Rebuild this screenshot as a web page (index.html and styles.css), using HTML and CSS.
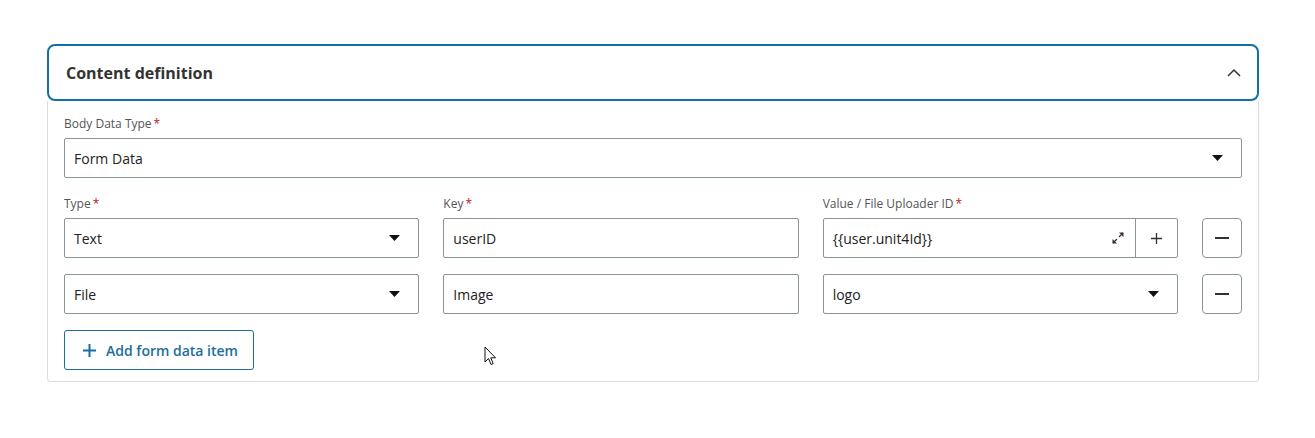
FILE: index.html
```html
<!DOCTYPE html>
<html lang="en">
<head>
    <meta charset="UTF-8">
    <meta name="viewport" content="width=device-width, initial-scale=1.0">
    <title>Content definition</title>
    <link rel="stylesheet" href="styles.css">
</head>
<body>
    <div class="card">
        <div class="card-header">
            <h2>Content definition</h2>
            <svg class="chevron" width="14" height="9" viewBox="0 0 14 9"><polyline points="1,8 7,2 13,8" fill="none" stroke="#333" stroke-width="1.5"/></svg>
        </div>
        <div class="card-body">
            <label class="label">Body Data Type<span class="req">*</span></label>
            <div class="field select">
                <span>Form Data</span>
                <svg class="caret" width="11" height="6" viewBox="0 0 11 6"><polygon points="0,0 11,0 5.5,6" fill="#111"/></svg>
            </div>

            <div class="row labels">
                <label class="label">Type<span class="req">*</span></label>
                <label class="label">Key<span class="req">*</span></label>
                <label class="label">Value / File Uploader ID<span class="req">*</span></label>
                <span></span>
            </div>

            <div class="row">
                <div class="field select">
                    <span>Text</span>
                    <svg class="caret" width="11" height="6" viewBox="0 0 11 6"><polygon points="0,0 11,0 5.5,6" fill="#111"/></svg>
                </div>
                <div class="field"><span>userID</span></div>
                <div class="field combo">
                    <div class="combo-input">
                        <span>{{user.unit4Id}}</span>
                        <svg class="expand" width="14" height="14" viewBox="0 0 14 14">
                            <path d="M2 12 L6 8 M8 6 L12 2" stroke="#333" stroke-width="1.2" fill="none"/>
                            <polygon points="1.5,8 1.5,12.5 6,12.5" fill="#333"/>
                            <polygon points="8,1.5 12.5,1.5 12.5,6" fill="#333"/>
                        </svg>
                    </div>
                    <div class="combo-btn">
                        <svg width="11" height="11" viewBox="0 0 11 11"><path d="M5.5 0 V11 M0 5.5 H11" stroke="#333" stroke-width="1.3"/></svg>
                    </div>
                </div>
                <button class="icon-btn">
                    <svg width="14" height="2" viewBox="0 0 14 2"><path d="M0 1 H14" stroke="#333" stroke-width="2"/></svg>
                </button>
            </div>

            <div class="row">
                <div class="field select">
                    <span>File</span>
                    <svg class="caret" width="11" height="6" viewBox="0 0 11 6"><polygon points="0,0 11,0 5.5,6" fill="#111"/></svg>
                </div>
                <div class="field"><span>Image</span></div>
                <div class="field select">
                    <span>logo</span>
                    <svg class="caret" width="11" height="6" viewBox="0 0 11 6"><polygon points="0,0 11,0 5.5,6" fill="#111"/></svg>
                </div>
                <button class="icon-btn">
                    <svg width="14" height="2" viewBox="0 0 14 2"><path d="M0 1 H14" stroke="#333" stroke-width="2"/></svg>
                </button>
            </div>

            <button class="add-btn">
                <svg width="13" height="13" viewBox="0 0 13 13"><path d="M6.5 0 V13 M0 6.5 H13" stroke="#1a6d9e" stroke-width="2"/></svg>
                Add form data item
            </button>
        </div>
    </div>

    <!-- mouse pointer -->
    <svg class="cursor" width="13" height="20" viewBox="0 0 13 20">
        <path d="M1 1 L1 16 L4.5 12.5 L7 18.5 L9.2 17.6 L6.8 11.8 L11.5 11.8 Z" fill="#fff" stroke="#111" stroke-width="1"/>
    </svg>
</body>
</html>
```

FILE: styles.css
```css
body {
    margin: 0;
    padding: 44px 0 0 47px;
    font-family: "Open Sans", "Noto Sans", sans-serif;
    color: #222;
    background: #fff;
    position: relative;
    height: 438px;
    box-sizing: border-box;
}

.card {
    width: 1212px;
}

.card-header {
    height: 57px;
    box-sizing: border-box;
    border: 2px solid #1170a6;
    border-radius: 8px;
    padding: 0 16px 0 17px;
    display: flex;
    align-items: center;
    justify-content: space-between;
}

.card-header h2 {
    margin: 0;
    font-size: 16px;
    font-weight: 700;
    color: #333;
}

.chevron {
    margin-top: -1px;
}

.card-body {
    border: 1px solid #dcdcdc;
    border-top: none;
    border-radius: 0 0 4px 4px;
    padding: 15px 16px 11px 16px;
}

.label {
    display: block;
    font-size: 12px;
    line-height: 16px;
    color: #555;
    margin-bottom: 6px;
}

.req {
    color: #c0102a;
    margin-left: 2px;
}

.field {
    height: 40px;
    box-sizing: border-box;
    border: 1px solid #8a949b;
    border-radius: 2px;
    padding: 0 18px 0 9px;
    display: flex;
    align-items: center;
    justify-content: space-between;
    font-size: 14px;
    color: #222;
    background: #fff;
}

.row {
    display: grid;
    grid-template-columns: 1fr 1fr 1fr 40px;
    column-gap: 24px;
    margin-bottom: 16px;
}

.row.labels {
    margin-top: 18px;
    margin-bottom: 0;
}

.combo {
    padding: 0;
}

.combo-input {
    flex: 1;
    height: 100%;
    display: flex;
    align-items: center;
    justify-content: space-between;
    padding: 0 10px 0 9px;
}

.combo-btn {
    width: 41px;
    height: 100%;
    border-left: 1px solid #8a949b;
    display: flex;
    align-items: center;
    justify-content: center;
}

.icon-btn {
    width: 40px;
    height: 40px;
    border: 1px solid #8a949b;
    border-radius: 4px;
    background: #fff;
    padding: 0;
    display: flex;
    align-items: center;
    justify-content: center;
    cursor: pointer;
}

.add-btn {
    height: 40px;
    width: 190px;
    border: 1px solid #1a6d9e;
    border-radius: 3px;
    background: #fff;
    color: #1a6d9e;
    font-family: "Open Sans", "Noto Sans", sans-serif;
    font-size: 14px;
    font-weight: 600;
    display: flex;
    align-items: center;
    gap: 10px;
    padding: 0 0 0 18px;
    cursor: pointer;
}

.cursor {
    position: absolute;
    left: 484px;
    top: 346px;
}
```
